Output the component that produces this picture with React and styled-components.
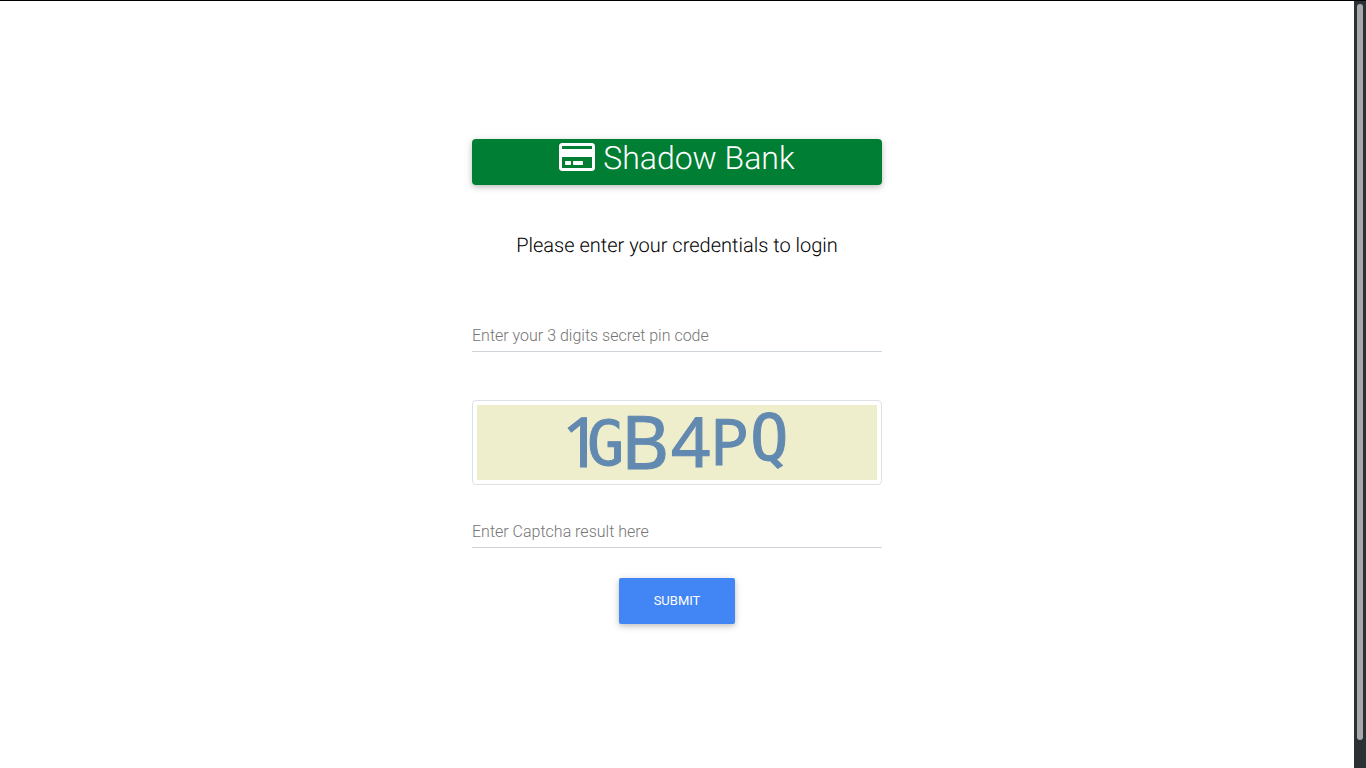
import React from "react";
import styled, { createGlobalStyle } from "styled-components";
import { FaRegCreditCard } from "react-icons/fa";

const GlobalStyle = createGlobalStyle`
  *, *::before, *::after { box-sizing: border-box; }
  body {
    margin: 0;
    background: #fff;
    color: #212529;
    font: 300 16px/24px Roboto, sans-serif;
    text-rendering: geometricPrecision;
  }
`;

const Screen = styled.div`
  display: flex;
  min-height: 100vh;
  border-top: 1px solid #000;
`;

const Page = styled.main`
  flex: 1;
  display: flex;
  justify-content: center;
  align-items: flex-start;
  padding: 138px 16px 48px;
`;

const LoginForm = styled.form`
  width: 100%;
  max-width: 410px;
  display: flex;
  flex-direction: column;
`;

const Brand = styled.h1`
  margin: 0 0 48px;
  padding-bottom: 8px;
  border-radius: 4px;
  background: #007e33;
  color: #fff;
  font-size: 32px;
  font-weight: 300;
  line-height: 38px;
  text-align: center;
  box-shadow: 0 2px 5px rgba(0, 0, 0, 0.16), 0 2px 10px rgba(0, 0, 0, 0.12);

  svg {
    width: 36px;
    height: 32px;
    vertical-align: -4px;
  }
`;

const Prompt = styled.p`
  margin: 0 0 63px;
  color: #000;
  font-size: 20px;
  text-align: center;
`;

const Field = styled.input`
  width: 100%;
  height: 32px;
  padding: 0;
  border: 0;
  border-bottom: 1px solid #ced4da;
  border-radius: 0;
  outline: 0;
  background: transparent;
  color: #495057;
  font: inherit;

  &::placeholder { color: #757575; opacity: 1; }
`;

const CaptchaFrame = styled.div`
  margin: 48px 0 31px;
  padding: 4px;
  border: 1px solid #dee2e6;
  border-radius: 4px;
  background: #fff;
`;

const CaptchaImage = styled.svg`
  display: block;
  width: 100%;
  height: 75px;
  overflow: visible;
  background: #eeeecc;
  fill: #6289b0;
  stroke: #6289b0;
  stroke-width: 1px;
`;

const SubmitButton = styled.button`
  align-self: center;
  width: 116px;
  height: 46px;
  margin-top: 30px;
  padding: 0;
  border: 0;
  border-radius: 2px;
  background: #4285f4;
  color: #fff;
  font: 400 13px/20px Roboto, sans-serif;
  text-transform: uppercase;
  cursor: pointer;
  box-shadow: 0 2px 5px rgba(0, 0, 0, 0.16), 0 2px 10px rgba(0, 0, 0, 0.12);
`;

const ScrollTrack = styled.div`
  flex: none;
  width: 12px;
  padding: 3px 3px 28px;
  background: #2a3033;
`;

const ScrollThumb = styled.div`
  width: 6px;
  height: 100%;
  border-radius: 3px;
  background: #a8a8a8;
`;

const SANS = '"Noto Sans", sans-serif';
const MONO = '"DejaVu Sans Mono", monospace';

const captcha = [
  { char: "1", x: 85, y: 62, size: 69, font: SANS },
  { char: "G", x: 110, y: 60, size: 62, font: MONO },
  { char: "B", x: 144, y: 64, size: 74, font: SANS },
  { char: "4", x: 194, y: 62, size: 69, font: SANS },
  { char: "P", x: 233, y: 60, size: 64, font: SANS },
  { char: "Q", x: 273, y: 55, size: 64, font: MONO },
];

export default function App() {
  return (
    <>
      <GlobalStyle />
      <Screen>
        <Page>
          <LoginForm onSubmit={(event) => event.preventDefault()}>
            <Brand>
              <FaRegCreditCard aria-hidden="true" /> Shadow Bank
            </Brand>
            <Prompt>Please enter your credentials to login</Prompt>
            <Field
              type="password"
              name="pin"
              aria-label="Enter your 3 digits secret pin code"
              placeholder="Enter your 3 digits secret pin code"
            />
            <CaptchaFrame>
              <CaptchaImage viewBox="0 0 400 75" role="img" aria-label="Captcha">
                {captcha.map(({ char, x, y, size, font }) => (
                  <text key={char} x={x} y={y} fontSize={size} fontFamily={font} fontWeight="400">
                    {char}
                  </text>
                ))}
              </CaptchaImage>
            </CaptchaFrame>
            <Field
              type="text"
              name="captcha"
              aria-label="Enter Captcha result here"
              placeholder="Enter Captcha result here"
            />
            <SubmitButton type="submit">Submit</SubmitButton>
          </LoginForm>
        </Page>
        <ScrollTrack aria-hidden="true">
          <ScrollThumb />
        </ScrollTrack>
      </Screen>
    </>
  );
}
